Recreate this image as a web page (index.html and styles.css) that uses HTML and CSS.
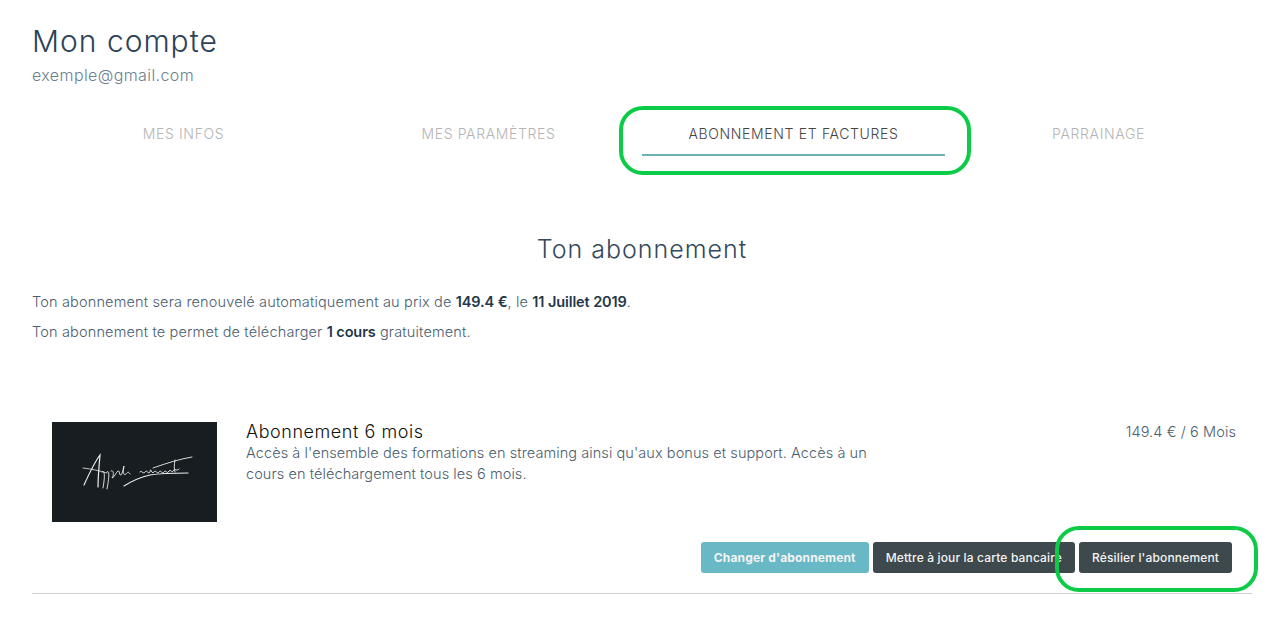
FILE: index.html
```html
<!DOCTYPE html>
<html lang="fr">
<head>
    <meta charset="UTF-8">
    <meta name="viewport" content="width=device-width, initial-scale=1.0">
    <title>Mon compte</title>
    <link rel="stylesheet" href="styles.css">
</head>
<body>
    <div class="container">
        <header class="account-header">
            <h1>Mon compte</h1>
            <p class="account-email">exemple@gmail.com</p>
        </header>

        <nav class="tabs">
            <a class="tab">MES INFOS</a>
            <a class="tab">MES PARAMÈTRES</a>
            <a class="tab tab-active">ABONNEMENT ET FACTURES</a>
            <a class="tab">PARRAINAGE</a>
        </nav>

        <section class="subscription">
            <h2>Ton abonnement</h2>
            <p class="sub-line">Ton abonnement sera renouvelé automatiquement au prix de <strong>149.4 €</strong>, le <strong>11 Juillet 2019</strong>.</p>
            <p class="sub-line">Ton abonnement te permet de télécharger <strong>1 cours</strong> gratuitement.</p>

            <div class="plan">
                <div class="plan-row">
                    <div class="plan-thumb">
                        <svg width="165" height="100" viewBox="0 0 165 100" fill="none" stroke="#eceeee" stroke-linecap="round" aria-hidden="true">
                            <path d="M32 63 C37 52 42 41 48 33 C47 44 46 55 46 65" stroke-width="1.2"/>
                            <path d="M31 46 C40 47 48 49 55 51" stroke-width=".8"/>
                            <path d="M50 50 C53 47 53 55 51 66 M55 50 C58 47 57 56 55 67 M59 49 C62 47 62 54 60 56 C63 55 64 50 66 49 C68 48 67 54 69 53 C71 51 71 46 72 44 C71 50 71 54 74 52 C76 50 76 49 78 52" stroke-width=".9"/>
                            <path d="M88 50 C89 47 91 53 93 50 C95 47 96 53 98 50 C99 44 99 53 102 50 C104 47 105 53 107 50 C109 47 110 53 112 50 C114 47 115 53 117 49 C119 47 120 52 122 48 C123 46 124 50 127 47" stroke-width="1"/>
                            <path d="M101 46 C115 41 128 37 140 35" stroke-width=".9"/>
                            <path d="M123 38 C122 43 122 47 123 50" stroke-width=".9"/>
                            <path d="M72 64 C80 59 89 55 98 53 C110 51 124 51 136 51" stroke-width="1.1"/>
                        </svg>
                    </div>
                    <div class="plan-info">
                        <h3>Abonnement 6 mois</h3>
                        <p>Accès à l'ensemble des formations en streaming ainsi qu'aux bonus et support. Accès à un cours en téléchargement tous les 6 mois.</p>
                    </div>
                    <div class="plan-price">149.4 € / 6 Mois</div>
                </div>
                <div class="plan-actions">
                    <button class="btn btn-primary">Changer d'abonnement</button>
                    <button class="btn btn-dark">Mettre à jour la carte bancaire</button>
                    <button class="btn btn-dark">Résilier l'abonnement</button>
                </div>
            </div>
        </section>

        <!-- Green annotations over the page -->
        <div class="note note-tab"></div>
        <div class="note note-cancel"></div>
    </div>
</body>
</html>
```

FILE: styles.css
```css
* {
    margin: 0;
    padding: 0;
    box-sizing: border-box;
    font-family: Inter, 'Noto Sans', sans-serif;
}

html, body {
    background-color: #fff;
    overflow: hidden;
}

.container {
    position: relative;
    height: 619px;
    padding: 0 30px 0 32px;
}

.account-header {
    padding-top: 22px;
}

.account-header h1 {
    font-size: 30px;
    line-height: 38px;
    font-weight: 300;
    letter-spacing: 1px;
    color: #2c4258;
}

.account-email {
    margin-top: 6px;
    font-size: 16px;
    line-height: 18px;
    font-weight: 300;
    letter-spacing: .4px;
    color: #6b7f8e;
}

.tabs {
    display: grid;
    grid-template-columns: repeat(4, 305px);
    margin: 26px 0 0 -1px;
}

.tab {
    height: 46px;
    padding-top: 15px;
    text-align: center;
    font-size: 14px;
    line-height: 18px;
    font-weight: 300;
    letter-spacing: .65px;
    color: #b4b4b4;
    border-bottom: 2px solid transparent;
}

.tab-active {
    color: #444;
    border-bottom-color: #6cb0b8;
    margin: 0 1px;
}

.subscription h2 {
    margin-top: 77px;
    text-align: center;
    font-size: 25px;
    line-height: 32px;
    font-weight: 300;
    letter-spacing: 1px;
    color: #33485c;
}

.sub-line {
    font-size: 14.5px;
    line-height: 18px;
    font-weight: 300;
    letter-spacing: .16px;
    color: #4a5d6e;
    margin-bottom: 12px;
}

.subscription h2 + .sub-line {
    margin-top: 28px;
}

.sub-line strong {
    font-weight: 600;
    letter-spacing: -.1px;
    color: #23364a;
}

.plan {
    margin-top: 81px;
    padding: 0 16px 20px 20px;
    border-bottom: 1px solid #d0d0d0;
}

.plan-row {
    display: flex;
    min-height: 100px;
}

.plan-thumb {
    flex: 0 0 165px;
    height: 100px;
    background-color: #171d20;
}

.plan-thumb svg {
    display: block;
}

.plan-info {
    width: 630px;
    margin-left: 29px;
}

.plan-info h3 {
    font-size: 18px;
    line-height: 20px;
    font-weight: 300;
    letter-spacing: .55px;
    color: #111;
}

.plan-info p {
    font-size: 14.5px;
    line-height: 21px;
    font-weight: 300;
    letter-spacing: .08px;
    color: #4a5d6e;
}

.plan-price {
    margin-left: auto;
    font-size: 14.5px;
    line-height: 20px;
    font-weight: 300;
    letter-spacing: .1px;
    color: #4a5d6e;
}

.plan-actions {
    display: flex;
    justify-content: flex-end;
    gap: 4px;
    margin-top: 20px;
    margin-right: 4px;
}

.btn {
    height: 31px;
    padding: 0 13px;
    border: 0;
    border-radius: 3px;
    font-size: 12px;
    letter-spacing: .15px;
    color: #f4f4f4;
}

.btn-primary {
    background-color: #69b8c6;
    font-weight: 700;
}

.btn-dark {
    background-color: #3e494e;
    font-weight: 500;
}

.note {
    position: absolute;
    border: 4px solid #0ccc47;
}

.note-tab {
    left: 619px;
    top: 106px;
    width: 352px;
    height: 69px;
    border-radius: 24px;
}

.note-cancel {
    left: 1055px;
    top: 526px;
    width: 203px;
    height: 66px;
    border-radius: 24px;
}
```
